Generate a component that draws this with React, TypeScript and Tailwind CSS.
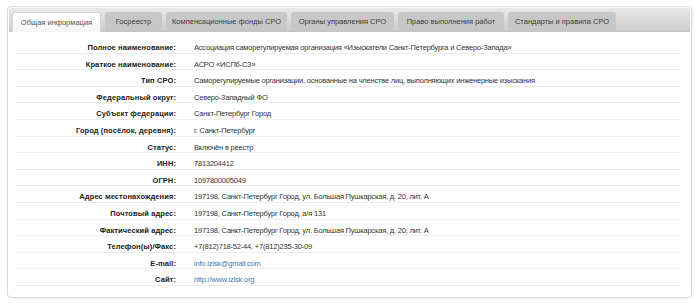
import React from 'react';

const tabs = [
  { title: 'Общая информация', w: 'w-[89px]', active: true },
  { title: 'Госреестр', w: 'w-[57px]' },
  { title: 'Компенсационные фонды СРО', w: 'w-[121px]' },
  { title: 'Органы управления СРО', w: 'w-[103px]' },
  { title: 'Право выполнения работ', w: 'w-[106px]' },
  { title: 'Стандарты и правила СРО', w: 'w-[108px]' },
];

// строки карточки
const rows: { label: string; value: string; link?: boolean }[] = [
  { label: 'Полное наименование:', value: 'Ассоциация саморегулируемая организация «Изыскатели Санкт-Петербурга и Северо-Запада»' },
  { label: 'Краткое наименование:', value: 'АСРО «ИСПб-СЗ»' },
  { label: 'Тип СРО:', value: 'Саморегулируемые организации, основанные на членстве лиц, выполняющих инженерные изыскания' },
  { label: 'Федеральный округ:', value: 'Северо-Западный ФО' },
  { label: 'Субъект федерации:', value: 'Санкт-Петербург Город' },
  { label: 'Город (посёлок, деревня):', value: 'г. Санкт-Петербург' },
  { label: 'Статус:', value: 'Включён в реестр' },
  { label: 'ИНН:', value: '7813204412' },
  { label: 'ОГРН:', value: '1097800005049' },
  { label: 'Адрес местонахождения:', value: '197198, Санкт-Петербург Город, ул. Большая Пушкарская, д. 20, лит. А' },
  { label: 'Почтовый адрес:', value: '197198, Санкт-Петербург Город, а/я 131' },
  { label: 'Фактический адрес:', value: '197198, Санкт-Петербург Город, ул. Большая Пушкарская, д. 20, лит. А' },
  { label: 'Телефон(ы)/Факс:', value: '+7(812)718-52-44, +7(812)235-30-09' },
  { label: 'E-mail:', value: 'info.izisk@gmail.com', link: true },
  { label: 'Сайт:', value: 'http://www.izisk.org', link: true },
];

export default function App() {
  return (
    <div className="w-[700px] h-[306px] bg-white pt-[6px] pl-[7px] font-['Liberation_Sans',Arial,sans-serif] text-[7.5px]">
      <div className="w-[685px] h-[292px] border border-[#d9d9d9] rounded-[4px] p-[1px] shadow-[1px_1px_2px_rgba(0,0,0,0.08)]">
        <div className="h-[24px] rounded-t-[3px] bg-gradient-to-b from-[#e9e9e9] to-[#cccccc] border-b border-[#c4c4c4] flex items-end gap-[4px] pl-[3px]">
          {tabs.map((t) => (
            <div
              key={t.title}
              className={`${t.w} rounded-t-[3px] flex items-center justify-center whitespace-nowrap ${
                t.active
                  ? 'bg-gradient-to-b from-[#ffffff] to-[#f5f5f5] border border-b-0 border-[#d6d6d6] text-[#555] h-[20px] -mb-px'
                  : 'h-[19px] bg-[#c7c7c7] text-[#3c3c3c]'
              }`}
            >
              {t.title}
            </div>
          ))}
        </div>
        <div className="pt-[5px] pl-[7px] pr-[10px]">
          {rows.map((r) => (
            <div key={r.label} className="h-[16.6px] grid grid-cols-[160px_1fr] border-b border-[#eeeeee] pt-[5px] leading-[11px]">
              <div className="text-right font-bold text-[#1a1a1a] tracking-[0.1px]">{r.label}</div>
              <div className={`pl-[18px] tracking-[-0.2px] ${r.link ? 'text-[#3b7bb5]' : 'text-[#333]'}`}>{r.value}</div>
            </div>
          ))}
        </div>
      </div>
    </div>
  );
}
